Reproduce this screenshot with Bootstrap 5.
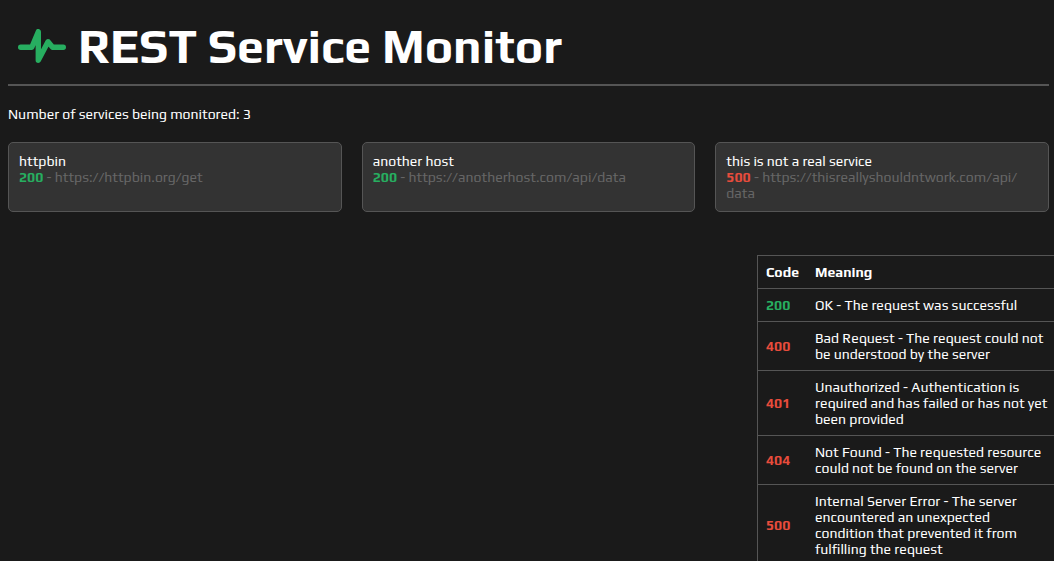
<!DOCTYPE html>
<html lang="en">
<head>
<meta charset="utf-8">
<meta name="viewport" content="width=device-width, initial-scale=1">
<title>REST Service Monitor</title>
<link href="https://cdn.jsdelivr.net/npm/bootstrap@5.3.0/dist/css/bootstrap.min.css" rel="stylesheet">
<style>
  body { background: #1a1a1a; color: #fff; font: 14px/16px Play, "Liberation Sans", sans-serif; height: 100vh; padding: 0 5px 0 8px; }
  .title-bar { height: 86px; padding: 8px 0 0 10px; border-bottom: 2px solid #555; }
  .title-bar h1 { font-size: 48px; line-height: 56px; margin-left: 12px; }
  .pulse { width: 48px; height: 34px; color: #27ae60; }
  .summary { margin: 20px 0; }
  .services { display: grid; grid-template-columns: repeat(3, minmax(0, 1fr)); gap: 20px; }
  .service { background: #333; border: 1px solid #555; border-radius: 5px; height: 70px; padding: 10px; }
  .url { color: #666; }
  .ok { color: #27ae60; }
  .fail { color: #e74c3c; }
  .codes { width: 300px; margin: 43px -8px 0 auto; border-collapse: collapse; border: 1px solid #555; }
  .codes th, .codes td { padding: 8px; }
  .codes tr { border-bottom: 1px solid #555; }
</style>
</head>
<body class="overflow-hidden">
  <header class="title-bar d-flex align-items-center">
    <svg class="pulse flex-shrink-0" viewBox="0 0 48 34" fill="none" stroke="currentColor" stroke-width="5.4" stroke-linecap="round" stroke-linejoin="round" aria-hidden="true">
      <path d="M2.7 18.3H13.8L20.3 2.7V31.3L30 12.7L34.6 18.3H45.3"/>
    </svg>
    <h1 class="fw-bold mb-0">REST Service Monitor</h1>
  </header>
  <main>
    <p class="summary">Number of services being monitored: 3</p>
    <section class="services">
      <div class="service"><div>httpbin</div><b class="ok">200</b><span class="url"> - https://httpbin.org/get</span></div>
      <div class="service"><div>another host</div><b class="ok">200</b><span class="url"> - https://anotherhost.com/api/data</span></div>
      <div class="service"><div>this is not a real service</div><b class="fail">500</b><span class="url"> - https://thisreallyshouldntwork.com/api/<wbr>data</span></div>
    </section>
    <table class="codes">
      <thead><tr><th>Code</th><th>Meaning</th></tr></thead>
      <tbody>
        <tr><td class="ok fw-bold">200</td><td>OK - The request was successful</td></tr>
        <tr><td class="fail fw-bold">400</td><td>Bad Request - The request could not be understood by the server</td></tr>
        <tr><td class="fail fw-bold">401</td><td>Unauthorized - Authentication is required and has failed or has not yet been provided</td></tr>
        <tr><td class="fail fw-bold">404</td><td>Not Found - The requested resource could not be found on the server</td></tr>
        <tr><td class="fail fw-bold">500</td><td>Internal Server Error - The server encountered an unexpected condition that prevented it from fulfilling the request</td></tr>
      </tbody>
    </table>
  </main>
<script src="https://cdn.jsdelivr.net/npm/bootstrap@5.3.0/dist/js/bootstrap.bundle.min.js"></script>
</body>
</html>
